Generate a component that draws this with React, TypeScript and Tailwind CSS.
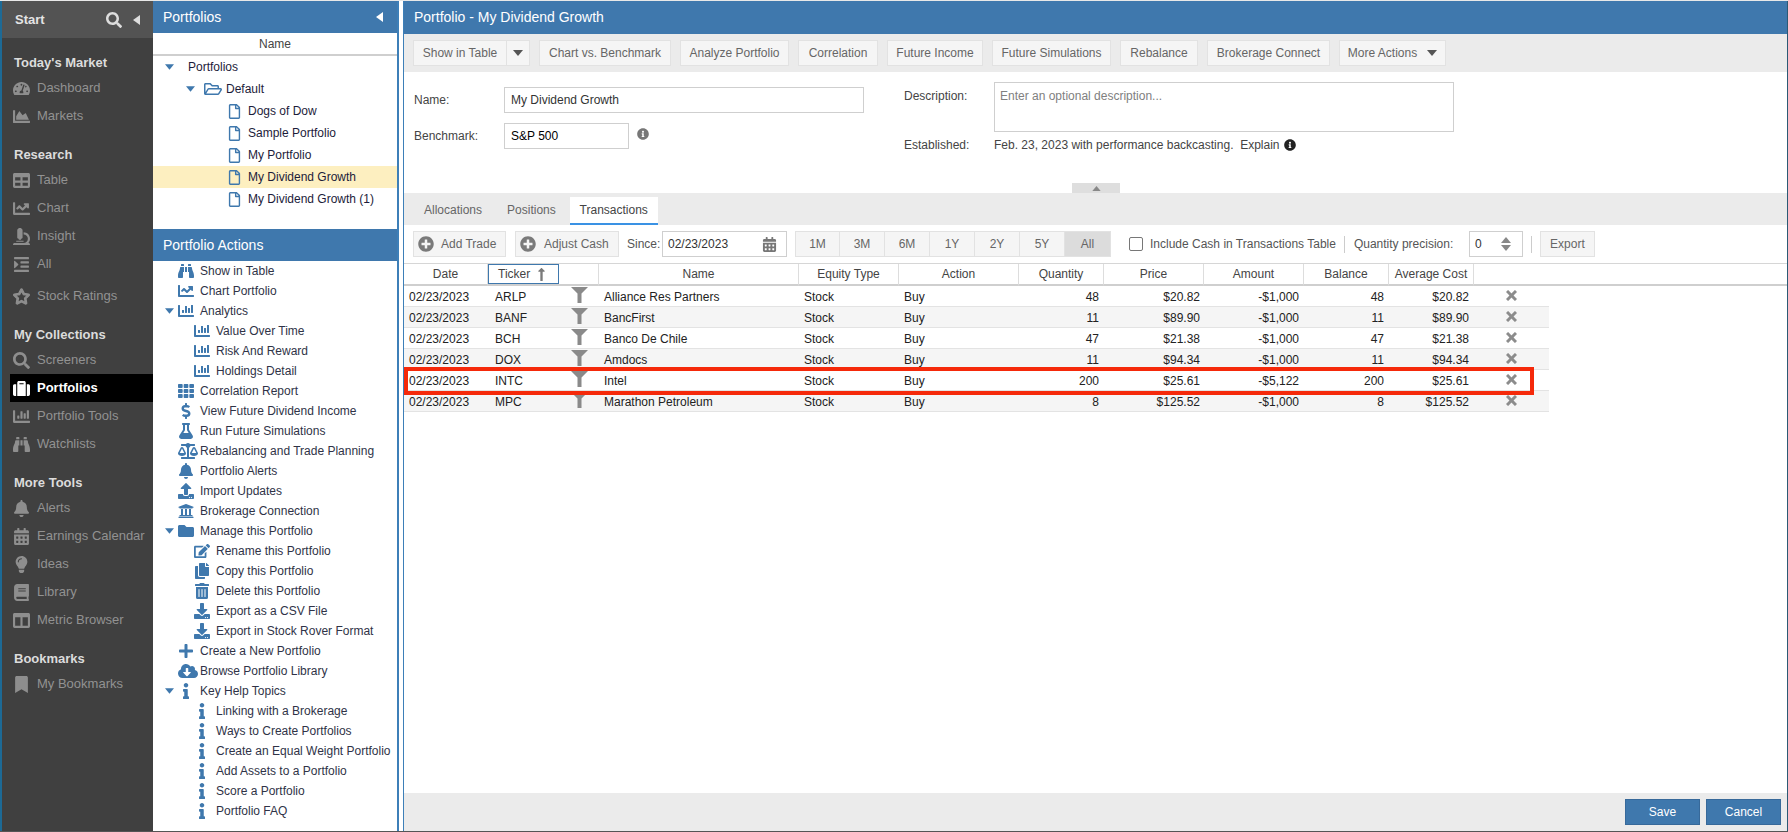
import type { ComponentType, ReactNode } from "react";
import {
  FaBalanceScale, FaBell, FaBinoculars, FaBook, FaBookmark, FaCalendarAlt, FaChartArea, FaChartBar, FaChartLine,
  FaCloudDownloadAlt, FaColumns, FaCopy, FaDollarSign, FaDownload, FaEdit, FaFlask, FaFolder, FaIndent,
  FaInfo, FaInfoCircle, FaLightbulb, FaLongArrowAltUp, FaMicroscope, FaPlus, FaPlusCircle, FaRegFile, FaRegFolderOpen,
  FaRegStar, FaSearch, FaSuitcase, FaTable, FaTachometerAlt, FaTh, FaTrashAlt, FaUniversity, FaUpload,
} from "react-icons/fa";

type Icon = ComponentType<{ size?: number; className?: string }>;

function Tri({ dir = "down", className = "" }: { dir?: "down" | "up" | "left"; className?: string }) {
  const pts = dir === "down" ? "0,0 10,0 5,6" : dir === "up" ? "0,6 10,6 5,0" : "7,0 7,10 0,5";
  const box = dir === "left" ? "0 0 7 10" : "0 0 10 6";
  return (
    <svg viewBox={box} className={className} fill="currentColor">
      <polygon points={pts} />
    </svg>
  );
}

const NAV: { title: string; cls: string; items: { label: string; icon: Icon; gap?: boolean }[] }[] = [
  {
    title: "Today's Market",
    cls: "mt-[14px]",
    items: [
      { label: "Dashboard", icon: FaTachometerAlt },
      { label: "Markets", icon: FaChartArea },
    ],
  },
  {
    title: "Research",
    cls: "mt-[14px]",
    items: [
      { label: "Table", icon: FaTable },
      { label: "Chart", icon: FaChartLine },
      { label: "Insight", icon: FaMicroscope },
      { label: "All", icon: FaIndent },
      { label: "Stock Ratings", icon: FaRegStar, gap: true },
    ],
  },
  {
    title: "My Collections",
    cls: "mt-[14px]",
    items: [
      { label: "Screeners", icon: FaSearch },
      { label: "Portfolios", icon: FaSuitcase },
      { label: "Portfolio Tools", icon: FaChartBar },
      { label: "Watchlists", icon: FaBinoculars },
    ],
  },
  {
    title: "More Tools",
    cls: "mt-[14px]",
    items: [
      { label: "Alerts", icon: FaBell },
      { label: "Earnings Calendar", icon: FaCalendarAlt },
      { label: "Ideas", icon: FaLightbulb },
      { label: "Library", icon: FaBook },
      { label: "Metric Browser", icon: FaColumns },
    ],
  },
  {
    title: "Bookmarks",
    cls: "mt-[14px]",
    items: [{ label: "My Bookmarks", icon: FaBookmark }],
  },
];

function Sidebar() {
  return (
    <aside className="w-[153px] shrink-0 border-l-2 border-[#1d6a96] bg-[#404040]">
      <div className="flex h-[37px] items-center bg-[#535353] pl-[13px]">
        <span className="text-[13px] font-bold text-[#e4e4e4]">Start</span>
        <FaSearch size={16} className="ml-[61px] text-[#dddddd]" />
        <Tri dir="left" className="ml-[11px] h-[10px] w-[7px] text-[#dddddd]" />
      </div>
      {NAV.map((s) => (
        <div key={s.title} className={s.cls}>
          <div className="flex h-[22px] items-center pl-[12px] text-[13px] font-bold text-[#dcdcdc]">{s.title}</div>
          {s.items.map((it) => {
            const active = it.label === "Portfolios";
            return (
              <div
                key={it.label}
                className={`ml-[8px] flex h-[28px] items-center pl-[3px] text-[13px] ${it.gap ? "mt-[4px]" : ""} ${active ? "bg-black font-bold text-white" : "text-[#929292]"}`}
              >
                <span className={`flex w-[24px] shrink-0 ${active ? "text-white" : "text-[#8e8e8e]"}`}>
                  <it.icon size={17} className={it.gap ? "stroke-[40]" : ""} />
                </span>
                {it.label}
              </div>
            );
          })}
        </div>
      ))}
    </aside>
  );
}

function TreeRow({ children, selected, className = "" }: { children: ReactNode; selected?: boolean; className?: string }) {
  return (
    <div className={`flex h-[22px] items-center text-[12px] text-[#1c1c3a] ${selected ? "bg-[#fdefc0]" : ""} ${className}`}>
      {children}
    </div>
  );
}

const DOCS = ["Dogs of Dow", "Sample Portfolio", "My Portfolio", "My Dividend Growth", "My Dividend Growth (1)"];

const ACTIONS: { label: string; icon: Icon; level?: 1; caret?: boolean; big?: boolean }[] = [
  { label: "Show in Table", icon: FaBinoculars },
  { label: "Chart Portfolio", icon: FaChartLine },
  { label: "Analytics", icon: FaChartBar, caret: true },
  { label: "Value Over Time", icon: FaChartBar, level: 1 },
  { label: "Risk And Reward", icon: FaChartBar, level: 1 },
  { label: "Holdings Detail", icon: FaChartBar, level: 1 },
  { label: "Correlation Report", icon: FaTh },
  { label: "View Future Dividend Income", icon: FaDollarSign },
  { label: "Run Future Simulations", icon: FaFlask },
  { label: "Rebalancing and Trade Planning", icon: FaBalanceScale, big: true },
  { label: "Portfolio Alerts", icon: FaBell },
  { label: "Import Updates", icon: FaUpload },
  { label: "Brokerage Connection", icon: FaUniversity },
  { label: "Manage this Portfolio", icon: FaFolder, caret: true },
  { label: "Rename this Portfolio", icon: FaEdit, level: 1 },
  { label: "Copy this Portfolio", icon: FaCopy, level: 1 },
  { label: "Delete this Portfolio", icon: FaTrashAlt, level: 1 },
  { label: "Export as a CSV File", icon: FaDownload, level: 1 },
  { label: "Export in Stock Rover Format", icon: FaDownload, level: 1 },
  { label: "Create a New Portfolio", icon: FaPlus },
  { label: "Browse Portfolio Library", icon: FaCloudDownloadAlt, big: true },
  { label: "Key Help Topics", icon: FaInfo, caret: true },
  { label: "Linking with a Brokerage", icon: FaInfo, level: 1 },
  { label: "Ways to Create Portfolios", icon: FaInfo, level: 1 },
  { label: "Create an Equal Weight Portfolio", icon: FaInfo, level: 1 },
  { label: "Add Assets to a Portfolio", icon: FaInfo, level: 1 },
  { label: "Score a Portfolio", icon: FaInfo, level: 1 },
  { label: "Portfolio FAQ", icon: FaInfo, level: 1 },
];

function PortfolioPanel() {
  return (
    <section className="w-[246px] shrink-0 border-r-2 border-[#3d7fb8] bg-white">
      <div className="h-[228px]">
        <div className="flex h-[32px] items-center justify-between bg-[#3f78ad] pl-[10px] pr-[14px] text-[14px] text-white">
          Portfolios
          <Tri dir="left" className="h-[10px] w-[7px] text-white" />
        </div>
        <div className="flex h-[23px] items-center justify-center border-b-2 border-[#cfcfcf] text-[12px] text-[#444444]">Name</div>
        <TreeRow>
          <Tri className="ml-[12px] h-[6px] w-[9px] text-[#3f78ad]" />
          <span className="ml-[14px]">Portfolios</span>
        </TreeRow>
        <TreeRow>
          <Tri className="ml-[33px] h-[6px] w-[9px] text-[#3f78ad]" />
          <FaRegFolderOpen size={18} className="ml-[9px] text-[#3f78ad]" />
          <span className="ml-[4px]">Default</span>
        </TreeRow>
        {DOCS.map((d) => (
          <TreeRow key={d} selected={d === "My Dividend Growth"}>
            <FaRegFile size={15} className="ml-[75px] w-[13px] text-[#3f78ad]" />
            <span className="ml-[7px]">{d}</span>
          </TreeRow>
        ))}
      </div>
      <div className="flex h-[32px] items-center bg-[#3f78ad] pl-[10px] text-[14px] text-white">Portfolio Actions</div>
      {ACTIONS.map((a) => (
        <div key={a.label} className="flex h-[20px] items-center text-[12px] text-[#2f3347]">
          <span className="flex w-[25px] shrink-0 pl-[12px]">{a.caret && <Tri className="h-[6px] w-[9px] text-[#3f78ad]" />}</span>
          <span className={`flex h-[16px] w-[16px] shrink-0 items-center justify-center text-[#3f78ad] ${a.level ? "ml-[16px]" : ""}`}>
            <a.icon size={a.big ? 20 : 16} className={a.big ? "ml-[4px] shrink-0" : "shrink-0"} />
          </span>
          <span className="ml-[6px] whitespace-nowrap">{a.label}</span>
        </div>
      ))}
    </section>
  );
}

const BTN = "flex h-[26px] items-center justify-center border border-[#e2e2e2] bg-[#f5f5f5] text-[12px] text-[#666666]";

function TopToolbar() {
  return (
    <div className="flex h-[38px] items-center gap-[9px] bg-[#ebebeb] pl-[9px]">
      <div className={`${BTN} w-[117px]`}>
        <span className="flex h-full w-[92px] items-center justify-center">Show in Table</span>
        <span className="flex h-full flex-1 items-center justify-center border-l border-[#e2e2e2]">
          <Tri className="h-[6px] w-[10px] text-[#555555]" />
        </span>
      </div>
      <div className={`${BTN} w-[132px]`}>Chart vs. Benchmark</div>
      <div className={`${BTN} w-[109px]`}>Analyze Portfolio</div>
      <div className={`${BTN} w-[80px]`}>Correlation</div>
      <div className={`${BTN} w-[96px]`}>Future Income</div>
      <div className={`${BTN} w-[119px]`}>Future Simulations</div>
      <div className={`${BTN} w-[78px]`}>Rebalance</div>
      <div className={`${BTN} w-[123px]`}>Brokerage Connect</div>
      <div className={`${BTN} w-[107px] gap-[10px]`}>
        More Actions
        <Tri className="h-[6px] w-[10px] text-[#555555]" />
      </div>
    </div>
  );
}

function DetailsForm() {
  const field = "h-[26px] border border-[#cfcfcf] bg-white px-[6px] text-[12px] outline-none";
  return (
    <div className="flex h-[121px] flex-col">
      <div className="flex flex-1 text-[12px] text-[#444444]">
        <div className="w-[500px] shrink-0 pl-[10px] pt-[15px]">
          <div className="flex items-center">
            <span className="w-[90px]">Name:</span>
            <input readOnly value="My Dividend Growth" className={`${field} w-[360px] text-[#333333]`} />
          </div>
          <div className="mt-[10px] flex items-center">
            <span className="w-[90px]">Benchmark:</span>
            <input readOnly value="S&P 500" className={`${field} w-[125px] text-black`} />
            <FaInfoCircle size={12} className="mb-[5px] ml-[8px] text-[#777777]" />
          </div>
        </div>
        <div className="pt-[10px]">
          <div className="flex">
            <span className="w-[90px] pt-[5px]">Description:</span>
            <textarea
              readOnly
              placeholder="Enter an optional description..."
              className="h-[50px] w-[460px] resize-none border border-[#cfcfcf] px-[5px] py-[4px] text-[12px] outline-none placeholder:text-[#808080]"
            />
          </div>
          <div className="mt-[6px] flex h-[14px] items-center">
            <span className="w-[90px]">Established:</span>
            <span className="whitespace-pre">Feb. 23, 2023 with performance backcasting.  Explain</span>
            <FaInfoCircle size={12} className="ml-[4px] text-[#222222]" />
          </div>
        </div>
      </div>
      <div className="ml-[668px] flex h-[10px] w-[48px] items-center justify-center bg-[#dedede]">
        <Tri dir="up" className="h-[5px] w-[9px] text-[#888888]" />
      </div>
    </div>
  );
}

function TabStrip() {
  return (
    <div className="flex h-[32px] items-end bg-[#ebebeb] text-[12px] text-[#666666]">
      <span className="flex h-[28px] items-center pl-[20px] pb-[2px]">Allocations</span>
      <span className="flex h-[28px] items-center pl-[25px] pb-[2px]">Positions</span>
      <span className="ml-[14px] flex h-[28px] w-[88px] items-center justify-center border-b-2 border-[#3a92e4] bg-white text-[#444444]">Transactions</span>
    </div>
  );
}

const RANGES = ["1M", "3M", "6M", "1Y", "2Y", "5Y", "All"];

function TxToolbar() {
  return (
    <div className="flex h-[38px] items-center pl-[9px] text-[12px] text-[#555555]">
      <div className={`${BTN} w-[93px] justify-start gap-[7px] pl-[4px]`}>
        <FaPlusCircle size={16} className="text-[#7a7a7a]" />
        Add Trade
      </div>
      <div className={`${BTN} ml-[9px] w-[104px] justify-start gap-[8px] pl-[4px]`}>
        <FaPlusCircle size={16} className="text-[#7a7a7a]" />
        Adjust Cash
      </div>
      <span className="ml-[8px] w-[35px]">Since:</span>
      <div className="flex h-[26px] w-[125px] items-center justify-between border border-[#cfcfcf] pl-[5px] pr-[9px] text-[#333333]">
        02/23/2023
        <FaCalendarAlt size={15} className="text-[#777777]" />
      </div>
      <div className="ml-[8px] flex">
        {RANGES.map((r) => (
          <div
            key={r}
            className={`flex h-[26px] items-center justify-center border-y border-r border-[#e2e2e2] first:border-l ${r === "All" ? "w-[46px] bg-[#dcdcdc]" : "w-[45px] bg-[#f5f5f5]"} text-[#666666]`}
          >
            {r}
          </div>
        ))}
      </div>
      <span className="ml-[18px] h-[14px] w-[14px] rounded-[2px] border border-[#777777] bg-white" />
      <span className="ml-[7px] whitespace-nowrap">Include Cash in Transactions Table</span>
      <span className="ml-[8px] h-[17px] w-px bg-[#cccccc]" />
      <span className="ml-[9px] w-[115px] whitespace-nowrap">Quantity precision:</span>
      <div className="flex h-[26px] w-[54px] items-center justify-between border border-[#cfcfcf] pl-[5px] pr-[11px] text-[#333333]">
        0
        <span className="flex flex-col gap-[2px]">
          <Tri dir="up" className="h-[6px] w-[10px] text-[#888888]" />
          <Tri className="h-[6px] w-[10px] text-[#888888]" />
        </span>
      </div>
      <span className="ml-[8px] h-[17px] w-px bg-[#cccccc]" />
      <div className={`${BTN} ml-[8px] w-[55px]`}>Export</div>
    </div>
  );
}

const ROWS = [
  ["ARLP", "Alliance Res Partners", "48", "$20.82", "-$1,000"],
  ["BANF", "BancFirst", "11", "$89.90", "-$1,000"],
  ["BCH", "Banco De Chile", "47", "$21.38", "-$1,000"],
  ["DOX", "Amdocs", "11", "$94.34", "-$1,000"],
  ["INTC", "Intel", "200", "$25.61", "-$5,122"],
  ["MPC", "Marathon Petroleum", "8", "$125.52", "-$1,000"],
];

const HEAD = ["Date", "Ticker", "", "Name", "Equity Type", "Action", "Quantity", "Price", "Amount", "Balance", "Average Cost", ""];

function Funnel() {
  return (
    <svg viewBox="0 0 17 16" className="mb-[2px] ml-[12px] block h-[16px] w-[17px] text-[#8a8a8a]" fill="currentColor">
      <polygon points="0,0 17,0 10.5,6.5 10.5,16 6.5,16 6.5,6.5" />
    </svg>
  );
}

function RemoveX() {
  return (
    <svg viewBox="0 0 11 11" className="mb-[2px] ml-[32px] block h-[11px] w-[11px] text-[#8c8c8c]" stroke="currentColor" strokeWidth="3">
      <line x1="1" y1="1" x2="10" y2="10" />
      <line x1="10" y1="1" x2="1" y2="10" />
    </svg>
  );
}

function TxTable() {
  return (
    <div className="relative">
      <table className="w-full table-fixed border-separate border-spacing-0 border-t border-[#d6d6d6] text-[12px]">
        <colgroup>
          <col className="w-[84px]" />
          <col className="w-[71px]" />
          <col className="w-[40px]" />
          <col className="w-[200px]" />
          <col className="w-[100px]" />
          <col className="w-[120px]" />
          <col className="w-[85px]" />
          <col className="w-[100px]" />
          <col className="w-[100px]" />
          <col className="w-[85px]" />
          <col className="w-[85px]" />
          <col className="w-[75px]" />
          <col />
        </colgroup>
        <thead>
          <tr>
            {HEAD.map((h, i) =>
              h === "Ticker" ? (
                <th key={i} className="h-[22px] border-b-2 border-b-[#cfcfcf] p-0 font-normal text-[#444444]">
                  <div className="flex h-[20px] items-center gap-[4px] border border-[#3f78ad] pl-[9px]">
                    Ticker
                    <FaLongArrowAltUp size={15} className="text-[#7a7a7a]" />
                  </div>
                </th>
              ) : (
                <th
                  key={i}
                  className={`h-[22px] border-b-2 border-b-[#cfcfcf] p-0 font-normal text-[#444444] ${i === 11 ? "" : "border-r border-r-[#dddddd]"}`}
                >
                  {h}
                </th>
              ),
            )}
            <th className="border-b-2 border-b-[#cfcfcf] p-0" />
          </tr>
        </thead>
        <tbody className="text-[#222222]">
          {ROWS.map((r, i) => {
            const td = `h-[21px] border-b border-[#e3e3e3] p-0 ${i % 2 ? "bg-[#f5f5f5]" : "bg-white"}`;
            const cell = `${td} pt-px`;
            return (
              <tr key={r[0]}>
                <td className={`${cell} pl-[5px]`}>02/23/2023</td>
                <td className={`${cell} pl-[7px]`}>{r[0]}</td>
                <td className={td}>
                  <Funnel />
                </td>
                <td className={`${cell} pl-[5px]`}>{r[1]}</td>
                <td className={`${cell} pl-[5px]`}>Stock</td>
                <td className={`${cell} pl-[5px]`}>Buy</td>
                <td className={`${cell} pr-[5px] text-right`}>{r[2]}</td>
                <td className={`${cell} pr-[4px] text-right`}>{r[3]}</td>
                <td className={`${cell} pr-[5px] text-right`}>{r[4]}</td>
                <td className={`${cell} pr-[5px] text-right`}>{r[2]}</td>
                <td className={`${cell} pr-[5px] text-right`}>{r[3]}</td>
                <td className={td}>
                  <RemoveX />
                </td>
                <td className="p-0" />
              </tr>
            );
          })}
        </tbody>
      </table>
      <div className="absolute left-0 top-[104px] h-[28px] w-[1130px] border-4 border-[#f5290a]" />
    </div>
  );
}

function MainPanel() {
  return (
    <main className="flex min-w-0 flex-1 flex-col border-x border-l-[#3d7fb8] border-r-[#2b5a75] bg-white">
      <div className="flex h-[33px] shrink-0 items-center bg-[#3f78ad] pl-[10px] text-[14px] text-white">Portfolio - My Dividend Growth</div>
      <TopToolbar />
      <DetailsForm />
      <TabStrip />
      <TxToolbar />
      <TxTable />
      <div className="mt-auto flex h-[38px] items-center justify-end gap-[6px] bg-[#ebebeb] pr-[6px] text-[12px] text-white">
        <div className="flex h-[26px] w-[75px] items-center justify-center border border-[#37699a] bg-[#3f78ad]">Save</div>
        <div className="flex h-[26px] w-[75px] items-center justify-center border border-[#37699a] bg-[#3f78ad]">Cancel</div>
      </div>
    </main>
  );
}

export default function App() {
  return (
    <div className="flex h-[832px] w-[1788px] overflow-hidden border-y border-t-[#e8e8e8] border-b-[#555555] bg-white font-['Liberation_Sans',Arial,sans-serif]">
      <Sidebar />
      <PortfolioPanel />
      <div className="w-[4px] shrink-0" />
      <MainPanel />
    </div>
  );
}
